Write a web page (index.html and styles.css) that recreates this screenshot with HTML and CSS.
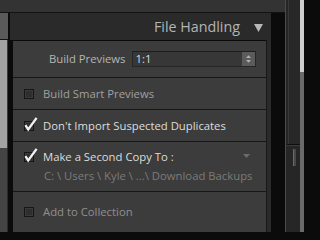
FILE: index.html
```html
<!DOCTYPE html>
<html>
<head>
<meta charset="utf-8">
<link rel="stylesheet" href="styles.css">
</head>
<body>
<div class="app">
  <div class="main">
    <div class="topbar"></div>
    <div class="body">
      <div class="leftcol">
        <div class="lc-a"></div>
        <div class="lc-b"></div>
        <div class="lc-c"></div>
      </div>
      <div class="panel">
        <div class="header">
          <span class="title">File Handling</span>
          <svg class="disclose" width="9" height="8" viewBox="0 0 9 8"><polygon points="0,0 9,0 4.5,8" fill="#b8b8b8"/></svg>
        </div>
        <div class="content">
          <div class="row r1">
            <span class="label">Build Previews</span>
            <div class="select">
              <span class="sel-text">1:1</span>
              <span class="stepper">
                <svg width="13" height="14" viewBox="0 0 13 14"><polygon points="4,6 9,6 6.5,3.2" fill="#b0b0b0"/><polygon points="4,8 9,8 6.5,10.8" fill="#b0b0b0"/></svg>
              </span>
            </div>
          </div>
          <div class="row r2">
            <span class="cb"></span>
            <span class="text dim">Build Smart Previews</span>
          </div>
          <div class="row r3">
            <span class="cb checked">
              <svg class="tick" width="15" height="15" viewBox="0 0 15 15"><path d="M1.4 8.2 L4.2 12.4 L12.6 0.8" fill="none" stroke="#f2f2f2" stroke-width="2.3"/></svg>
            </span>
            <span class="text bright">Don't Import Suspected Duplicates</span>
          </div>
          <div class="row r4">
            <div class="line">
              <span class="cb checked">
                <svg class="tick" width="15" height="15" viewBox="0 0 15 15"><path d="M1.4 8.2 L4.2 12.4 L12.6 0.8" fill="none" stroke="#f2f2f2" stroke-width="2.3"/></svg>
              </span>
              <span class="text bright">Make a Second Copy To :</span>
              <svg class="menu-tri" width="7" height="4" viewBox="0 0 7 4"><polygon points="0,0 7,0 3.5,4" fill="#6c6c6c"/></svg>
            </div>
            <div class="path">C: \ Users \ Kyle \ ...\ Download Backups</div>
          </div>
          <div class="row r5">
            <span class="cb"></span>
            <span class="text dimmer">Add to Collection</span>
          </div>
        </div>
      </div>
    </div>
  </div>
  <div class="rightstrip">
    <div class="track">
      <div class="track-top"></div>
      <div class="track-bottom"><div class="thumb"></div></div>
    </div>
    <div class="edge">
      <div class="edge-top"></div>
      <div class="edge-bottom"></div>
    </div>
  </div>
</div>
</body>
</html>
```

FILE: styles.css
```css
* { box-sizing: border-box; }
html, body { margin: 0; padding: 0; height: 232px; overflow: hidden; }
body { background: #0b0b0b; font-family: "Open Sans", "DejaVu Sans", sans-serif; }

.app { display: flex; height: 232px; }
.main { width: 285px; display: flex; flex-direction: column; }
.topbar { height: 14px; background: #333333; border-bottom: 1px solid #121212; }
.body { flex: 1; display: flex; background: #0b0b0b; }

.leftcol { width: 8px; display: flex; flex-direction: column; }
.lc-a { height: 27px; background: #5a5a5a; border-bottom: 1px solid #151515; }
.lc-b { height: 108px; background: #a3a3a3; border-right: 1px solid #3a3a3a; }
.lc-c { flex: 1; background: #444444; border-right: 1px solid #2a2a2a; }

.panel { width: 261px; margin-left: 2px; background: #2a2a2a; display: flex; flex-direction: column; }
.header { height: 27px; display: flex; justify-content: flex-end; align-items: flex-start; padding: 4px 8px 0 0; }
.title { color: #b4b4b4; font-size: 14.3px; line-height: 20px; }
.disclose { margin-left: 14px; margin-top: 7px; }

.content { flex: 1; margin-right: 4px; background: #3c3c3c; border-top: 1px solid #0b0b0b; border-left: 3px solid #0b0b0b; border-right: 1px solid #181818; }

.row { display: flex; align-items: center; padding-left: 11px; border-bottom: 1px solid #161616; font-size: 11.3px; line-height: 14px; }
.r1 { height: 37px; padding-left: 36px; }
.r2, .r3 { height: 32px; }
.r4 { height: 50px; flex-direction: column; align-items: stretch; padding-top: 8px; }
.r5 { height: 40px; border-bottom: none; }

.label { color: #b5b5b5; }
.select { margin-left: 6px; width: 124px; height: 16px; display: flex; align-items: center; background: #373737; border: 1px solid #262626; border-top-color: #1d1d1d; padding-left: 3px; }
.sel-text { color: #dadada; font-size: 11.3px; line-height: 14px; }
.stepper { margin-left: auto; width: 13px; height: 14px; background: #5b5b5b; display: flex; }

.cb { position: relative; width: 10px; height: 10px; flex: none; background: #2e2e2e; border: 1px solid #161616; box-shadow: inset 0 0 0 1px #3a3a3a; }
.tick { position: absolute; left: -1px; top: -5px; }
.text { margin-left: 9px; }
.dim { color: #a0a0a0; }
.bright { color: #dcdcdc; }
.dimmer { color: #909090; }

.line { display: flex; align-items: center; height: 14px; }
.menu-tri { margin-left: auto; margin-right: 16px; margin-top: -2px; }
.path { margin-left: 20px; margin-top: 5px; color: #7b7b7b; }

.rightstrip { width: 19px; display: flex; border-left: 1px solid #4a4a4a; background: #262626; }
.track { flex: 1; display: flex; flex-direction: column; }
.track-top { height: 145px; border-left: 2px solid #262626; background: #282828; box-shadow: inset 1px 0 0 #383838; border-bottom: 1px solid #0e0e0e; }
.track-bottom { flex: 1; background: #262626; border-top: 1px solid #3a3a3a; padding: 3px 0 0 7px; }
.thumb { width: 3px; height: 17px; background: #474747; border-left: 1px solid #6a6a6a; }
.edge { width: 4px; display: flex; flex-direction: column; }
.edge-top { height: 72px; background: #cfcfcf; }
.edge-bottom { flex: 1; background: #6a6a6a; }
```
